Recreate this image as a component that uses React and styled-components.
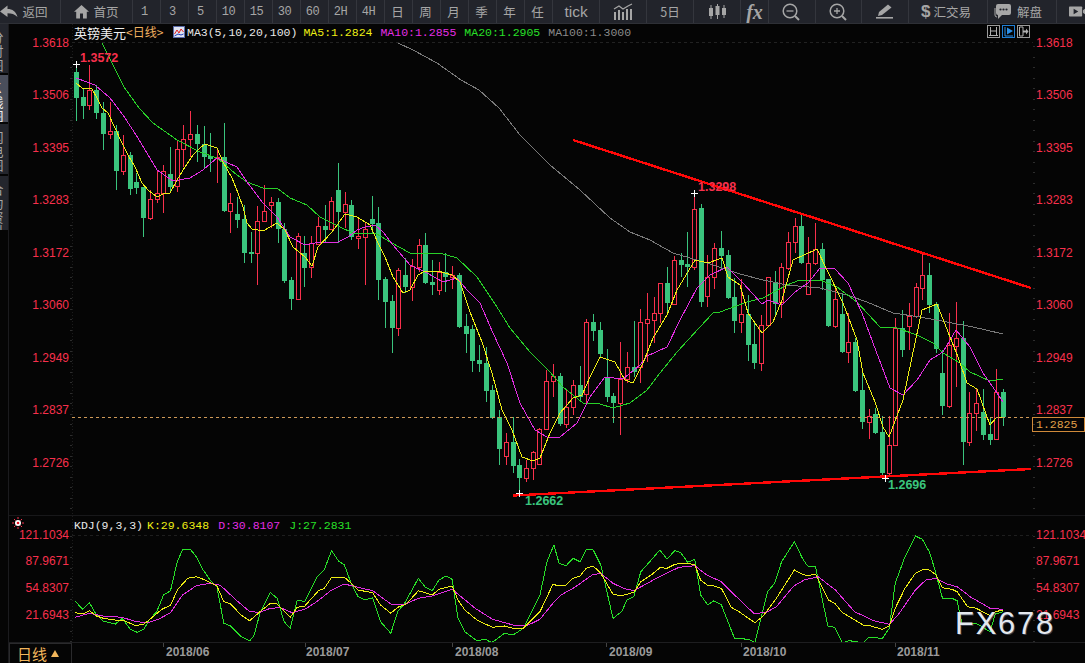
import React from 'react';
import styled, { createGlobalStyle } from 'styled-components';

const RED = '#f8304c';
const GREEN = '#3ac47d';
const MONO = '"Liberation Mono", "Noto Sans CJK SC", monospace';
const CJK = '"Noto Sans CJK SC", "Liberation Sans", sans-serif';
const SANS = '"Liberation Sans", Arial, sans-serif';

// candles, left to right: [high, body top, body bottom, low, 1 = red]
const CANDLES = [
  [64,72,98,121,0],[88,97,106,119,0],[65,90,105,110,1],[85,90,113,119,0],[102,113,134,150,0],
  [102,131,134,139,1],[125,131,171,190,0],[135,155,171,175,1],[152,155,189,195,0],[173,182,188,194,0],
  [187,187,218,237,0],[190,199,218,220,1],[170,193,199,203,1],[165,171,193,213,1],[147,174,187,193,0],
  [141,149,186,192,1],[125,139,149,167,1],[111,134,139,157,1],[125,134,144,162,0],[126,144,157,168,0],
  [133,156,159,172,0],[150,157,158,183,1],[123,157,211,212,0],[193,203,211,233,1],[197,214,220,228,0],
  [205,219,253,263,0],[232,252,254,263,0],[206,221,253,285,1],[185,211,221,222,1],[197,202,205,228,1],
  [198,202,229,243,0],[223,229,281,283,0],[277,280,299,310,0],[233,236,299,299,1],[236,253,268,287,0],
  [236,243,267,278,1],[217,226,244,244,1],[205,226,230,243,0],[197,201,229,229,1],[163,190,212,243,0],
  [192,204,212,228,1],[200,205,237,240,0],[219,236,238,249,1],[222,229,237,285,1],[196,219,224,233,0],
  [207,223,280,300,0],[277,279,302,328,0],[295,301,328,353,0],[268,270,328,336,1],[258,275,287,293,0],
  [259,266,287,301,1],[239,245,267,272,1],[233,245,283,284,0],[260,282,285,295,0],[262,272,290,295,1],
  [253,272,277,292,0],[266,275,277,289,1],[273,275,327,328,0],[314,326,334,353,0],[325,329,361,372,0],
  [345,360,364,372,0],[347,363,391,402,0],[385,390,418,419,0],[410,417,449,465,0],[433,442,456,465,1],
  [417,442,466,473,0],[459,465,478,493,0],[460,468,478,482,1],[451,452,468,480,1],[428,429,464,464,1],
  [370,381,429,430,1],[364,376,381,397,1],[373,376,424,426,0],[390,407,424,428,1],[380,385,407,415,1],
  [366,385,397,400,0],[319,322,394,403,1],[314,322,331,341,0],[322,330,354,358,0],[349,378,397,402,0],
  [393,396,403,423,0],[342,379,403,435,1],[352,367,379,383,1],[321,367,372,377,0],[309,322,367,383,1],
  [293,319,323,362,1],[297,313,320,343,1],[283,283,313,323,1],[267,283,303,313,0],[256,260,304,304,1],
  [253,260,265,277,0],[232,264,267,287,0],[193,209,267,270,1],[204,208,302,307,0],[255,277,296,307,1],
  [243,248,277,289,1],[231,248,256,270,0],[250,255,298,299,0],[278,297,321,333,0],[279,314,322,333,1],
  [295,314,345,361,0],[323,344,363,369,0],[315,325,363,371,1],[277,277,325,326,1],[271,282,304,315,0],
  [263,267,302,318,1],[232,242,268,270,1],[218,226,242,253,1],[215,226,263,264,0],[237,263,294,295,1],
  [223,249,263,265,1],[243,249,280,290,0],[279,279,326,327,0],[288,299,326,328,1],[293,314,352,353,0],
  [313,342,352,363,1],[338,342,391,392,0],[373,390,422,429,0],[409,416,422,439,1],[408,414,433,434,0],
  [416,432,473,478,0],[416,445,473,477,1],[318,328,445,445,1],[310,328,350,357,0],[303,316,326,350,1],
  [283,287,316,318,1],[253,275,288,300,1],[263,275,305,313,0],[302,304,349,353,0],[350,373,406,415,0],
  [313,345,406,408,1],[302,338,346,387,1],[321,338,442,465,0],[392,413,442,446,1],[388,403,413,431,1],
  [389,412,435,440,0],[417,434,440,445,0],[369,392,439,440,1],[389,392,417,426,0],
];

const MA5 = '76,83 82,88 92,89 97,98 102,108 108,113 115,128 122,143 128,155 135,167 142,183 148,190 157,197 163,194 170,193 177,180 185,167 193,155 200,148 205,144 217,148 223,162 232,178 238,193 243,207 247,223 252,229 263,231 277,223 285,230 293,247 305,257 312,266 318,247 332,232 345,214 357,217 370,225 378,243 385,257 393,277 403,293 410,290 418,275 425,271 438,271 452,275 460,282 470,312 482,342 492,373 502,410 512,430 522,457 533,461 540,458 550,433 560,413 573,398 582,395 590,377 600,357 615,362 625,380 633,383 643,363 653,338 667,315 677,290 695,260 708,263 722,258 728,277 740,285 748,313 762,333 773,322 782,300 793,260 817,249 827,270 843,303 857,340 863,373 875,402 883,427 889,437 903,400 915,343 922,310 937,304 950,337 958,357 967,383 977,389 990,425 997,417 1005,417';
const MA10 = '76,78 95,85 110,98 123,115 138,138 157,170 173,181 190,178 203,170 217,158 237,167 247,182 263,203 277,217 290,237 305,245 320,242 338,242 348,237 357,230 365,227 375,225 383,232 393,245 410,265 427,273 443,282 457,278 467,290 480,303 493,333 507,363 520,403 535,430 547,437 560,437 577,423 590,397 605,377 623,379 640,365 647,356 667,347 680,320 697,288 710,275 727,267 743,283 762,304 768,300 782,305 795,292 808,283 820,268 835,269 848,283 862,313 873,343 890,388 903,395 917,380 930,360 943,352 956,330 970,347 983,373 997,393 1003,402';
const MA20 = '102,43 124,87 139,108 153,123 177,140 200,152 217,158 237,175 247,182 263,188 277,188 290,198 307,205 320,217 340,227 353,233 377,234 390,242 410,253 440,253 457,258 477,277 497,307 510,328 530,352 550,372 563,387 583,403 600,404 613,408 630,403 647,390 660,373 677,352 688,340 700,327 713,313 720,312 747,302 763,298 787,285 800,280 820,280 837,287 857,302 880,327 897,328 917,335 933,343 943,353 960,363 970,372 990,381 1003,379';
const MA100 = '398,43 413,50 437,63 461,80 479,90 499,108 520,135 550,165 580,190 610,218 630,232 650,240 673,253 707,263 740,274 763,280 787,285 820,288 847,295 867,302 893,313 920,317 947,322 973,327 1003,334';

// KDJ lines were traced from two crops, so each half has its own x origin and scale
const left = (p) => p.map(([x, y]) => `${(x / 2.904).toFixed(1)},${(500 + y / 3).toFixed(1)}`);
const right = (p) => p.map(([x, y]) => `${(540 + x / 2.877).toFixed(1)},${(500 + y / 3).toFixed(1)}`);

const J_LINE = [
  ...left([[218,303],[240,328],[260,308],[280,345],[300,363],[335,372],[355,355],[378,387],[398,397],[418,388],[433,360],[455,335],[475,285],[495,272],[515,185],[530,150],[552,147],[570,170],[590,210],[610,240],[630,260],[650,370],[670,378],[700,410],[725,422],[737,408],[755,340],[785,278],[805,295],[825,365],[843,385],[863,300],[885,305],[920,232],[942,208],[963,152],[983,183],[1000,195],[1020,250],[1040,290],[1060,300],[1082,293],[1105,365],[1135,400],[1155,335],[1175,310],[1215,235],[1235,262],[1255,272],[1275,240],[1295,228],[1313,238],[1330,355],[1350,395],[1385,422],[1410,418],[1428,428],[1465,400],[1490,405],[1520,385]]),
  ...right([[0,285],[20,185],[40,135],[55,190],[75,197],[95,175],[115,185],[133,148],[153,150],[175,195],[210,355],[235,335],[250,300],[270,290],[290,215],[320,180],[345,150],[365,177],[388,152],[405,158],[425,187],[445,178],[462,285],[483,315],[500,302],[522,315],[550,390],[560,415],[600,418],[618,428],[655,275],[675,250],[695,185],[732,125],[755,175],[770,198],[793,200],[828,378],[848,382],[870,428],[890,422],[930,428],[945,412],[985,415],[1005,385],[1022,250],[1050,170],[1080,108],[1100,118],[1120,155],[1135,205],[1158,295],[1185,295],[1200,302],[1215,375],[1255,370],[1295,395],[1310,342],[1332,335]]),
].join(' ');

const K_LINE = [
  ...left([[218,338],[240,342],[260,332],[280,348],[300,355],[335,360],[355,360],[395,377],[418,372],[433,360],[470,328],[495,316],[515,270],[545,235],[570,230],[590,238],[630,258],[650,305],[670,312],[700,345],[725,362],[755,335],[785,310],[805,312],[843,352],[863,322],[885,318],[925,272],[942,265],[963,232],[1000,232],[1020,250],[1040,270],[1082,278],[1105,315],[1135,340],[1155,322],[1180,312],[1215,272],[1255,285],[1275,268],[1313,258],[1330,300],[1350,330],[1385,360],[1430,382],[1465,378],[1490,385],[1520,385]]),
  ...right([[0,335],[37,253],[55,258],[75,255],[95,235],[115,228],[133,205],[153,198],[175,220],[210,283],[235,287],[270,277],[290,245],[320,225],[345,203],[365,205],[388,193],[405,190],[445,193],[462,240],[483,257],[500,258],[522,265],[550,322],[575,337],[618,368],[640,350],[680,295],[732,210],[755,223],[770,227],[793,222],[830,300],[848,310],[870,338],[890,350],[930,375],[945,376],[985,388],[1005,378],[1022,325],[1050,265],[1080,220],[1105,207],[1120,210],[1140,225],[1158,263],[1185,268],[1200,275],[1230,320],[1255,325],[1295,347],[1310,335],[1332,330]]),
].join(' ');

const D_LINE = [
  ...left([[218,352],[260,340],[300,348],[355,352],[395,365],[430,368],[460,358],[495,338],[530,285],[570,257],[610,250],[640,256],[680,295],[725,335],[755,337],[785,325],[815,323],[848,338],[885,328],[920,305],[960,272],[1000,252],[1040,262],[1082,272],[1135,312],[1175,313],[1215,295],[1255,288],[1313,268],[1380,325],[1430,358],[1490,375],[1530,377]]),
  ...right([[0,358],[37,310],[60,285],[100,262],[150,225],[175,220],[210,250],[240,265],[270,272],[300,255],[340,232],[400,202],[445,197],[480,225],[522,245],[560,285],[615,340],[650,338],[680,320],[730,258],[760,240],[800,230],[850,270],[905,335],[960,362],[1005,373],[1030,345],[1080,270],[1110,240],[1140,235],[1170,252],[1200,260],[1240,292],[1295,325],[1332,328]]),
].join(' ');

const PRICES = [
  ['1.3618', 43], ['1.3506', 95], ['1.3395', 148], ['1.3283', 200], ['1.3172', 253],
  ['1.3060', 305], ['1.2949', 358], ['1.2837', 410], ['1.2726', 463],
];
const KDJ_LEVELS = [['121.1034', 535], ['87.9671', 561], ['54.8307', 588], ['21.6943', 615]];
const DATES = [
  ['2018/06', 163, 166], ['2018/07', 305, 306], ['2018/08', 452, 455],
  ['2018/09', 606, 609], ['2018/10', 741, 743], ['2018/11', 895, 897],
];
const CROSSES = [[76, 64], [694, 193], [519, 493], [885, 478]];

const GlobalStyle = createGlobalStyle`
  html, body {
    margin: 0;
    background: #050505;
    overflow: hidden;
  }
`;

const Page = styled.div`
  width: 1085px;
  height: 663px;
  display: flex;
  flex-direction: column;
  background: #050505;
  overflow: hidden;
`;

const Toolbar = styled.div`
  height: 23px;
  flex: none;
  display: flex;
  background: #22242b;
  border-bottom: 1px solid #2e3036;
`;

const ToolButton = styled.div`
  width: ${(p) => p.$w}px;
  flex: none;
  box-sizing: border-box;
  display: flex;
  align-items: center;
  justify-content: center;
  gap: ${(p) => p.$gap ?? 4}px;
  padding-right: ${(p) => p.$pr ?? 0}px;
  color: #a6a6a6;
  border-right: 1px solid #34363d;
  font-family: ${CJK};
  font-size: 12.5px;
  overflow: hidden;
  &:last-child { border-right: none; justify-content: flex-start; padding-left: 12px; }
`;

const NumLabel = styled.span`
  font-family: ${MONO};
  font-size: 12px;
  letter-spacing: -0.4px;
`;

const TickLabel = styled.span`
  font-family: ${SANS};
  font-size: 15.5px;
  font-weight: 500;
`;

const FxLabel = styled.span`
  font-family: "Liberation Serif", serif;
  font-style: italic;
  font-weight: 700;
  font-size: 20px;
  line-height: 20px;
`;

const DollarLabel = styled.span`
  font-family: ${SANS};
  font-weight: 700;
  font-size: 17px;
`;

const Content = styled.div`
  flex: 1;
  display: flex;
  min-height: 0;
`;

const SideTabs = styled.div`
  width: 8px;
  flex: none;
  display: flex;
  flex-direction: column;
  gap: 2px;
  border-right: 1px solid #1b1b1e;
  overflow: hidden;
`;

const SideTab = styled.div`
  height: ${(p) => p.$h}px;
  flex: none;
  display: flex;
  flex-direction: column;
  align-items: center;
  width: 8px;
  padding-top: 6px;
  box-sizing: border-box;
  background: ${(p) => (p.$active ? '#4a4e5b' : '#24262d')};
  color: ${(p) => (p.$active ? '#f4f4f4' : '#a8a8a8')};
  font-family: ${CJK};
  font-size: 13px;
  line-height: 14px;
  overflow: hidden;
`;

const TabChar = styled.span`
  display: block;
  width: 14px;
  margin-left: -14px;
  text-align: center;
`;

const Panes = styled.div`
  flex: 1;
  min-width: 0;
  display: flex;
  flex-direction: column;
  position: relative;
`;

const PricePane = styled.div`
  height: 492px;
  flex: none;
  position: relative;
  border-bottom: 1px solid #18181a;
  box-sizing: border-box;
`;

const KdjPane = styled.div`
  height: 127px;
  flex: none;
  position: relative;
  border-bottom: 1px solid #1e1e20;
  box-sizing: border-box;
`;

const ChartSvg = styled.svg`
  display: block;
  width: 100%;
  height: 100%;
  font-family: ${SANS};
  font-size: 12px;
`;

const Legend = styled.div`
  position: absolute;
  left: 65px;
  top: ${(p) => p.$top}px;
  display: flex;
  align-items: center;
  gap: ${(p) => p.$gap}px;
  height: 16px;
  white-space: nowrap;
`;

const LegendText = styled.span`
  color: ${(p) => p.$color};
  font-family: ${MONO};
  font-size: 11.5px;
  margin-right: ${(p) => p.$mr ?? 0}px;
`;

const SymbolName = styled.span`
  color: ${(p) => p.$color};
  font-family: ${CJK};
  font-size: ${(p) => p.$size}px;
`;

const SymbolGroup = styled.span`
  display: flex;
  width: 91px;
`;

const LegendIcon = styled.svg`
  width: 12px;
  height: 12px;
  margin-right: -6px;
  flex: none;
`;

const ViewSwitch = styled.div`
  position: absolute;
  top: 1px;
  left: 978px;
  display: flex;
  gap: 2px;
`;

const ViewButton = styled.div`
  width: 13px;
  height: 13px;
  box-sizing: border-box;
  border: 1px solid ${(p) => (p.$active ? '#1f7fd6' : '#9a9a9a')};
  color: ${(p) => (p.$active ? '#2b8fe6' : '#b0b0b0')};
  display: flex;
`;

const LastPrice = styled.div`
  position: absolute;
  left: 1023px;
  top: 393px;
  width: 53px;
  height: 15px;
  box-sizing: border-box;
  border: 1px solid #d08a3a;
  color: #e0a04a;
  font-family: ${MONO};
  font-size: 11.5px;
  line-height: 13px;
  padding-left: 3px;
`;

const Watermark = styled.div`
  position: absolute;
  left: 946px;
  top: 582px;
  color: #e4e8ee;
  font-family: ${SANS};
  font-size: 31px;
  line-height: 36px;
  letter-spacing: 1.7px;
  text-shadow: 1px 1px 0 rgba(120, 130, 160, 0.45);
`;

const DateBar = styled.div`
  flex: 1;
  display: flex;
  min-height: 0;
`;

const RangeButton = styled.div`
  width: 63px;
  flex: none;
  box-sizing: border-box;
  display: flex;
  align-items: center;
  gap: 4px;
  padding-left: 7px;
  border: 1px solid #2a2a2c;
  border-bottom: none;
  color: #f2b65c;
  font-family: ${CJK};
  font-size: 15px;
`;

const RangeArrow = styled.span`
  width: 0;
  height: 0;
  border-left: 4px solid transparent;
  border-right: 4px solid transparent;
  border-bottom: 7px solid #f2b65c;
`;

const DateAxis = styled.svg`
  flex: 1;
  min-width: 0;
  height: 100%;
  display: block;
  font-family: ${SANS};
  font-size: 12px;
  font-weight: 700;
`;

const Icon = ({ w = 18, h = 16, children }) => (
  <svg width={w} height={h} viewBox={`0 0 ${w} ${h}`} fill="#a6a6a6">
    {children}
  </svg>
);

const BackIcon = () => (
  <Icon>
    <path d="M0 7.5 L7.5 1.5 V5 C12.5 5 16 7.5 17.5 13 C14.5 10 11.5 9.2 7.5 9.2 V13 Z" />
  </Icon>
);

const HomeIcon = () => (
  <Icon w={15} h={15}>
    <path d="M7.5 1 L0 7.8 H2.2 V14.5 H6 V9.5 H9 V14.5 H12.8 V7.8 H15 Z" />
  </Icon>
);

const TrendIcon = () => (
  <Icon w={20} h={17}>
    <rect x="1" y="9" width="2" height="8" />
    <rect x="5" y="7" width="2" height="10" />
    <rect x="9" y="9" width="2" height="8" />
    <rect x="13" y="6" width="2" height="11" />
    <rect x="17" y="6" width="2" height="11" />
    <path d="M1 6 L6 3 L10 6 L15 3 L19 1" fill="none" stroke="#a6a6a6" strokeWidth="1.2" />
  </Icon>
);

const CandleIcon = () => (
  <Icon w={19} h={15}>
    <rect x="1" y="4" width="4" height="8" />
    <rect x="2.5" y="1" width="1" height="14" />
    <rect x="7.5" y="2" width="4" height="9" />
    <rect x="9" y="0" width="1" height="15" />
    <rect x="14" y="4" width="4" height="7" />
    <rect x="15.5" y="1" width="1" height="13" />
  </Icon>
);

const ZoomIcon = ({ plus }) => (
  <Icon w={18} h={18}>
    <circle cx="8" cy="8" r="6.8" fill="none" stroke="#a6a6a6" strokeWidth="1.5" />
    <path d="M13 13 L17 17" stroke="#a6a6a6" strokeWidth="2" />
    <path d={plus ? 'M5 8 H11 M8 5 V11' : 'M4.5 8 H11.5'} stroke="#a6a6a6" strokeWidth="1.3" />
  </Icon>
);

const PencilIcon = () => (
  <Icon w={17} h={15}>
    <path d="M12 0.5 L15.5 3.5 L6 11 L2 12 L3 8 Z" />
    <rect x="0" y="13" width="17" height="1.6" />
  </Icon>
);

const BubbleIcon = () => (
  <Icon w={17} h={17}>
    <path d="M4 1 H15 Q17 1 17 3 V10 Q17 12 15 12 H8 L4 16 V12 Q2 12 2 10 V3 Q2 1 4 1 Z" />
    <path d="M1 5 V12 Q1 14 3 14" fill="none" stroke="#a6a6a6" />
    <circle cx="6.5" cy="6.5" r="1.1" fill="#22242b" />
    <circle cx="9.5" cy="6.5" r="1.1" fill="#22242b" />
    <circle cx="12.5" cy="6.5" r="1.1" fill="#22242b" />
  </Icon>
);

const VideoIcon = () => (
  <Icon w={22} h={13}>
    <rect x="0" y="0" width="17" height="13" rx="1" />
    <path d="M6 3 L12 6.5 L6 10 Z" fill="#22242b" />
    <path d="M18 5 L22 2 V11 L18 8 Z" />
  </Icon>
);

const PERIODS = ['1', '3', '5', '10', '15', '30', '60', '2H', '4H'];
const RANGES = ['日', '周', '月', '季', '年', '任'];

const TopBar = () => (
  <Toolbar>
    <ToolButton $w={61} $pr={12}><BackIcon />返回</ToolButton>
    <ToolButton $w={72}><HomeIcon />首页</ToolButton>
    {PERIODS.map((p) => (
      <ToolButton key={p} $w={28} $pr={4}><NumLabel>{p}</NumLabel></ToolButton>
    ))}
    {RANGES.map((r) => (
      <ToolButton key={r} $w={28} $pr={2}>{r}</ToolButton>
    ))}
    <ToolButton $w={47}><TickLabel>tick</TickLabel></ToolButton>
    <ToolButton $w={47}><TrendIcon /></ToolButton>
    <ToolButton $w={47}>5日</ToolButton>
    <ToolButton $w={47}><CandleIcon /></ToolButton>
    <ToolButton $w={28}><FxLabel>fx</FxLabel></ToolButton>
    <ToolButton $w={47} $pr={2}><ZoomIcon /></ToolButton>
    <ToolButton $w={46} $pr={2}><ZoomIcon plus /></ToolButton>
    <ToolButton $w={47} $pr={2}><PencilIcon /></ToolButton>
    <ToolButton $w={79} $gap={3} $pr={4}><DollarLabel>$</DollarLabel>汇交易</ToolButton>
    <ToolButton $w={69} $gap={6} $pr={8}><BubbleIcon />解盘</ToolButton>
    <ToolButton $w={29}><VideoIcon /></ToolButton>
  </Toolbar>
);

const Candles = () =>
  CANDLES.map(([high, top, bottom, low, up], i) => {
    const x = Math.round(76 + i * 6.717);
    const color = up ? RED : GREEN;
    return (
      <g key={i}>
        <line x1={x + 0.5} x2={x + 0.5} y1={high} y2={low} stroke={color} />
        {up ? (
          <rect x={x - 1.5} y={top + 0.5} width={4} height={Math.max(bottom - top, 1)} fill="#050505" stroke={color} />
        ) : (
          <rect x={x - 2} y={top} width={5} height={Math.max(bottom - top, 2)} fill={color} />
        )}
      </g>
    );
  });

const AxisTicks = ({ from, to }) => {
  const ticks = [];
  for (let y = from; y < to; y += 10.5) {
    ticks.push(<rect key={`l${y}`} x="70" y={Math.round(y)} width="2" height="1" fill="#2c2c2c" />);
    ticks.push(<rect key={`r${y}`} x="1033" y={Math.round(y)} width="2" height="1" fill="#2c2c2c" />);
  }
  return ticks;
};

const Labels = ({ rows }) =>
  rows.map(([text, y]) => (
    <g key={text} fill={RED}>
      <text x="69" y={y + 4} textAnchor="end">{text}</text>
      <text x="1036" y={y + 4}>{text}</text>
    </g>
  ));

const PriceChart = () => (
  <ChartSvg viewBox="9 24 1076 491" preserveAspectRatio="none">
    <line x1="72.5" x2="72.5" y1="24" y2="516" stroke="#1c1c1c" strokeDasharray="1 2" />
    <line x1="72" x2="1033" y1="42.5" y2="42.5" stroke="#222" strokeDasharray="3 3" />
    <AxisTicks from={46} to={516} />
    <Candles />
    <g fill="none" shapeRendering="crispEdges" strokeWidth="1">
      <polyline points={MA100} stroke="#7a7a7a" />
      <polyline points={MA20} stroke="#28d028" />
      <polyline points={MA10} stroke="#e22ee2" />
      <polyline points={MA5} stroke="#eeee14" />
    </g>
    <line x1="72" x2="1033" y1="417.5" y2="417.5" stroke="#cf9a58" strokeDasharray="3 3" />
    <g stroke="#ff0808" strokeWidth="2.4" shapeRendering="crispEdges">
      <line x1="573" y1="140" x2="1031" y2="288" />
      <line x1="513" y1="495.5" x2="1031" y2="469" />
    </g>
    {CROSSES.map(([x, y]) => (
      <path key={x} d={`M${x - 3} ${y + 0.5} H${x + 4} M${x + 0.5} ${y - 3} V${y + 4}`} stroke="#fff" />
    ))}
    <g fontWeight="700" fontSize="12.5">
      <text x="80" y="62" fill={RED}>1.3572</text>
      <text x="698" y="191" fill={RED}>1.3298</text>
      <text x="525" y="505" fill={GREEN}>1.2662</text>
      <text x="888" y="489" fill={GREEN}>1.2696</text>
    </g>
    <Labels rows={PRICES} />
  </ChartSvg>
);

const KdjChart = () => (
  <ChartSvg viewBox="9 516 1076 126" preserveAspectRatio="none">
    <line x1="72.5" x2="72.5" y1="516" y2="643" stroke="#1c1c1c" strokeDasharray="1 2" />
    <line x1="72" x2="1033" y1="535.5" y2="535.5" stroke="#1e1e1e" strokeDasharray="3 3" />
    <AxisTicks from={536} to={643} />
    <g stroke={RED} strokeWidth="1">
      <path d="M18 517 V519 M18 527 V529 M12 523 H14 M22 523 H24 M14 519 L15.5 520.5 M22 519 L20.5 520.5 M14 527 L15.5 525.5 M22 527 L20.5 525.5" />
    </g>
    <circle cx="18" cy="523" r="3" fill="#fff" />
    <circle cx="18" cy="523" r="1.3" fill="#e01020" />
    <g fill="none" shapeRendering="crispEdges">
      <polyline points={J_LINE} stroke="#28e028" />
      <polyline points={D_LINE} stroke="#e22ee2" />
      <polyline points={K_LINE} stroke="#eeee14" />
    </g>
    <Labels rows={KDJ_LEVELS} />
  </ChartSvg>
);

const App = () => (
  <Page>
    <GlobalStyle />
    <TopBar />
    <Content>
      <SideTabs>
        {[
          ['分时图', 49],
          ['K线图', 47, true],
          ['闪电图', 50],
          ['合约资料', 54],
        ].map(([name, h, active]) => (
          <SideTab key={name} $h={h} $active={active}>
            {[...name].map((c, i) => (
              <TabChar key={i}>{c}</TabChar>
            ))}
          </SideTab>
        ))}
      </SideTabs>
      <Panes>
        <PricePane>
          <PriceChart />
          <Legend $top={0} $gap={8}>
            <SymbolGroup>
              <SymbolName $color="#eeeeee" $size={13}>英镑美元</SymbolName>
              <SymbolName $color="#f0b060" $size={12}>&lt;日线&gt;</SymbolName>
            </SymbolGroup>
            <LegendIcon viewBox="0 0 12 12">
              <rect x="0.5" y="0.5" width="11" height="11" fill="#dfe4f2" stroke="#5a6aa8" />
              <path d="M1.5 8 L4 4 L6 7 L8 3 L10.5 6" fill="none" stroke="#e02020" />
              <path d="M1.5 10 L5 8 L8 9 L10.5 8" fill="none" stroke="#2040c0" />
            </LegendIcon>
            <LegendText $color="#e8e8e8" $mr={-2}>MA3(5,10,20,100)</LegendText>
            <LegendText $color="#eeee14">MA5:1.2824</LegendText>
            <LegendText $color="#e42ee4">MA10:1.2855</LegendText>
            <LegendText $color="#28e028">MA20:1.2905</LegendText>
            <LegendText $color="#8a8a8a">MA100:1.3000</LegendText>
          </Legend>
          <ViewSwitch>
            <ViewButton>
              <svg viewBox="0 0 11 11" fill="none" stroke="currentColor">
                <path d="M2.5 1 V10 M8.5 1 V10 M1 9.5 H10 M3 5 H8" />
              </svg>
            </ViewButton>
            <ViewButton $active>
              <svg viewBox="0 0 11 11" fill="currentColor">
                <path d="M2 1 V10 H10" fill="none" stroke="currentColor" />
                <path d="M4 1.5 L10 5 L4 8.5 Z" />
              </svg>
            </ViewButton>
            <ViewButton>
              <svg viewBox="0 0 11 11" fill="currentColor">
                <path d="M1.5 1 H5 V10 H1.5 Z" fill="none" stroke="currentColor" />
                <path d="M5 4.5 H8 V2.5 L10.5 5.5 L8 8.5 V6.5 H5 Z" />
              </svg>
            </ViewButton>
          </ViewSwitch>
          <LastPrice>1.2825</LastPrice>
        </PricePane>
        <KdjPane>
          <KdjChart />
          <Legend $top={1} $gap={9}>
            <LegendText $color="#e8e8e8" $mr={-5}>KDJ(9,3,3)</LegendText>
            <LegendText $color="#eeee14">K:29.6348</LegendText>
            <LegendText $color="#e42ee4">D:30.8107</LegendText>
            <LegendText $color="#28e028">J:27.2831</LegendText>
          </Legend>
        </KdjPane>
        <DateBar>
          <RangeButton>日线<RangeArrow /></RangeButton>
          <DateAxis viewBox="72 643 1013 20" preserveAspectRatio="none">
            {DATES.map(([label, tick, x]) => (
              <g key={label}>
                <line x1={tick + 0.5} x2={tick + 0.5} y1="643" y2="647" stroke="#444" />
                <text x={x} y="656" fill="#9a9a9a">{label}</text>
              </g>
            ))}
          </DateAxis>
        </DateBar>
        <Watermark>FX678</Watermark>
      </Panes>
    </Content>
  </Page>
);

export default App;
